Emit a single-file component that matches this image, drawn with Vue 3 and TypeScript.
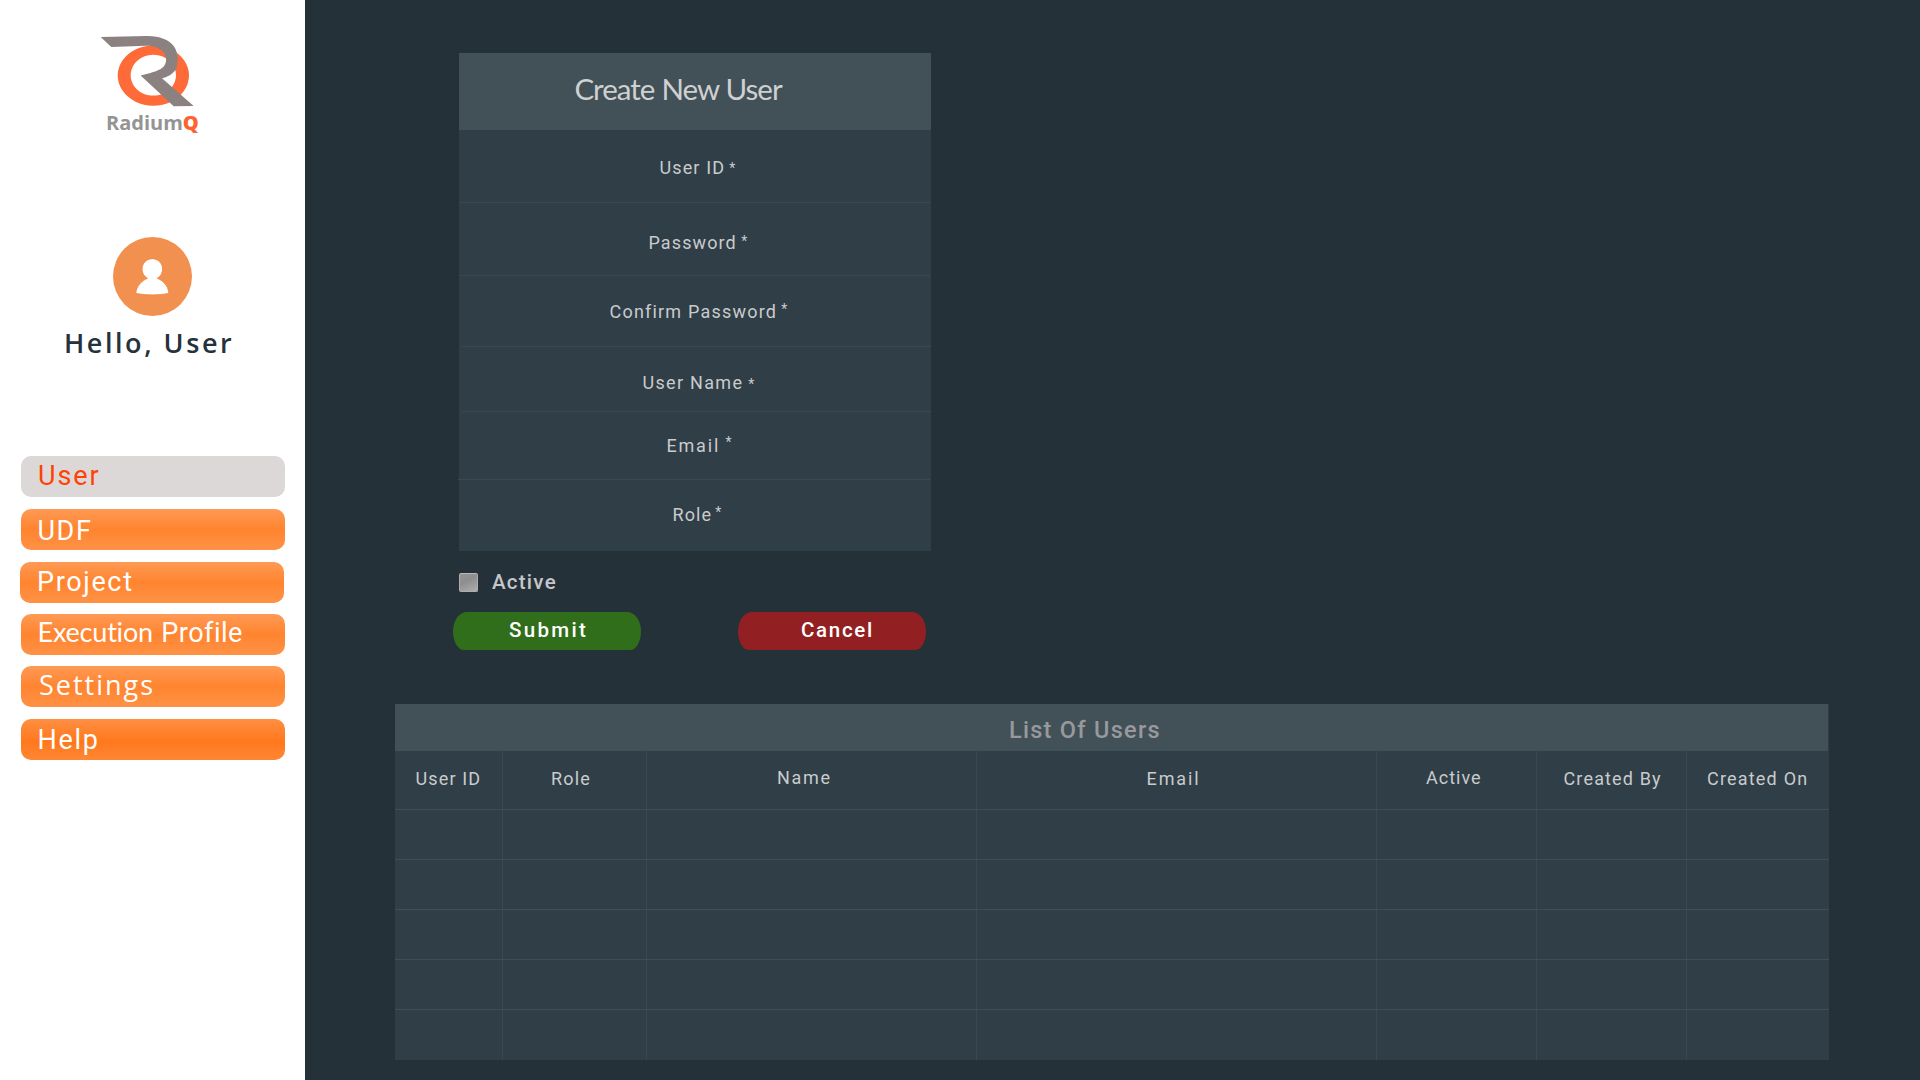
<script setup lang="ts">
interface NavItem {
  words: { text: string; face?: string; spacing: number; gap?: number; drop?: number }[]
  indent: number
  drop: number
  state?: string
}

interface Field {
  label: string
  height: number
  indent: number
  drop: number
  spacing: number
  starGap: number
  starLift: number
  rule?: string
}

interface Column {
  label: string
  indent: number
  spacing: number
  drop: number
}

const nav: NavItem[] = [
  { words: [{ text: 'User', spacing: 1.95 }], indent: 17, drop: 4, state: 'active' },
  { words: [{ text: 'UDF', spacing: 1.6 }], indent: 16.5, drop: 6 },
  { words: [{ text: 'Project', spacing: 1.65 }], indent: 17, drop: 4, state: 'shifted' },
  {
    words: [
      { text: 'Execution', face: 'humanist', spacing: -0.2, drop: -1 },
      { text: 'Profile', spacing: 0.5, gap: 8.4 },
    ],
    indent: 16.5,
    drop: 3,
  },
  { words: [{ text: 'Settings', face: 'open', spacing: 2, drop: -1 }], indent: 18, drop: 4 },
  { words: [{ text: 'Help', spacing: 1.7 }], indent: 16.5, drop: 5, state: 'strong' },
]

const fields: Field[] = [
  { label: 'User ID', height: 73, indent: 200.5, drop: 26, spacing: 1.12, starGap: 4, starLift: 0 },
  { label: 'Password', height: 73, indent: 189.5, drop: 28, spacing: 1.1, starGap: 4.5, starLift: -2 },
  { label: 'Confirm Password', height: 71, indent: 150.5, drop: 24, spacing: 1.2, starGap: 4, starLift: -3, rule: 'right' },
  { label: 'User Name', height: 65, indent: 183.5, drop: 24, spacing: 1.3, starGap: 5, starLift: 1, rule: 'right' },
  { label: 'Email', height: 68, indent: 207.5, drop: 22, spacing: 1.8, starGap: 5.5, starLift: -4, rule: 'left' },
  { label: 'Role', height: 71, indent: 213.5, drop: 23, spacing: 1.1, starGap: 3, starLift: -3, rule: 'none' },
]

const columns: Column[] = [
  { label: 'User ID', indent: 20.5, spacing: 1.15, drop: 16 },
  { label: 'Role', indent: 48, spacing: 1.2, drop: 16 },
  { label: 'Name', indent: 130, spacing: 1.7, drop: 15 },
  { label: 'Email', indent: 169.5, spacing: 1.9, drop: 16 },
  { label: 'Active', indent: 49, spacing: 1, drop: 15 },
  { label: 'Created By', indent: 26.5, spacing: 1.15, drop: 16 },
  { label: 'Created On', indent: 20, spacing: 1.2, drop: 16 },
]

const emptyRows = 5
const px = (n: number) => `${n}px`
</script>

<template>
  <div class="app">
    <aside class="sidebar">
      <div class="brand">
        <svg class="mark" viewBox="0 0 420 260" width="140" height="87" preserveAspectRatio="none" aria-hidden="true">
          <path
            fill="#ff6a39"
            fill-rule="evenodd"
            d="M220 76a107 90 0 1 0 .1 0zM220 104a68 61 0 1 1 -.1 0z"
          />
          <path
            fill="#8c8181"
            d="M62 51 L200 48 C236 47 266 58 281 78 C292 93 295 112 292 132 C289 154 271 168 246 174 L341 257 L281 258 L182 166 C205 160 232 155 247 143 C262 130 262 108 248 94 C237 83 220 77 198 77 L94 81 Z"
          />
        </svg>
        <div class="brand-name">Radium<b>Q</b></div>
      </div>

      <div class="profile">
        <svg class="avatar" viewBox="0 0 237 237" width="79" height="79" aria-hidden="true">
          <circle cx="118.500" cy="118.500" r="118.500" fill="#f2914f" />
          <path
            fill="#fff"
            stroke="#f37f33"
            stroke-width="2.500"
            d="M118 65c17 0 31 14 31 31 0 12-6 22-16 28 19 8 31 22 34 40 1 4-1 5-4 6-26 5-64 5-90 0-4-1-5-3-4-7 4-17 16-31 34-39-10-6-16-16-16-28 0-17 14-31 31-31z"
          />
        </svg>
        <div class="greeting">Hello, User</div>
      </div>

      <nav class="menu">
        <a v-for="(item, i) in nav" :key="i" class="menu-item" :class="item.state" :style="{ paddingLeft: px(item.indent), paddingTop: px(item.drop) }">
          <span
            v-for="word in item.words"
            :key="word.text"
            :class="word.face"
            :style="{ letterSpacing: px(word.spacing), marginLeft: px(word.gap ?? 0), marginTop: px(word.drop ?? 0) }"
          >{{ word.text }}</span>
        </a>
      </nav>
    </aside>

    <main class="content">
      <section class="form">
        <header class="form-title">Create New User</header>
        <div v-for="f in fields" :key="f.label" class="field" :class="f.rule" :style="{ height: px(f.height), paddingLeft: px(f.indent), paddingTop: px(f.drop) }">
          <label :style="{ letterSpacing: px(f.spacing) }">{{ f.label }}</label>
          <span class="star" :style="{ marginLeft: px(f.starGap), marginTop: px(f.starLift) }">*</span>
        </div>
      </section>

      <div class="active-row">
        <span class="checkbox"></span>
        <span class="active-label">Active</span>
      </div>

      <div class="actions">
        <button class="submit" type="button">Submit</button>
        <button class="cancel" type="button">Cancel</button>
      </div>

      <section class="list">
        <header class="list-title">List Of Users</header>
        <div class="row head">
          <div v-for="c in columns" :key="c.label" class="cell" :style="{ paddingLeft: px(c.indent), paddingTop: px(c.drop), letterSpacing: px(c.spacing) }">{{ c.label }}</div>
        </div>
        <div v-for="n in emptyRows" :key="n" class="row">
          <div v-for="c in columns" :key="c.label" class="cell"></div>
        </div>
      </section>
    </main>
  </div>
</template>

<style>
body {
  margin: 0;
  background: #253138;
}
</style>

<style scoped>
.app {
  display: flex;
  width: 1920px;
  height: 1080px;
  overflow: hidden;
  background: #253138;
  font-family: Roboto, sans-serif;
}
.app * {
  box-sizing: border-box;
}
.sidebar {
  width: 305px;
  height: 1080px;
  flex: none;
  background: #fff;
}
.brand {
  height: 237px;
  padding: 20px 0 0 80px;
}
.mark {
  display: block;
}
.brand-name {
  margin: 2px 0 0 26px;
  font: 700 20px/28px "Open Sans", sans-serif;
  letter-spacing: 0;
  color: #949494;
}
.brand-name b {
  color: #ff6231;
}
.profile {
  height: 219px;
  padding-left: 64px;
}
.avatar {
  display: block;
  margin-left: 49px;
}
.greeting {
  margin-top: 11px;
  font: 600 27px/32px "Open Sans", sans-serif;
  letter-spacing: 2.55px;
  color: #25323b;
  white-space: nowrap;
}
.menu {
  display: flex;
  flex-direction: column;
  padding-left: 21px;
}
.menu-item {
  display: flex;
  align-items: flex-start;
  width: 264px;
  height: 41px;
  margin-bottom: 12px;
  border-radius: 10px;
  background: linear-gradient(#ff9a55, #ff842f 50%, #ff9246);
  color: #fff;
  font-size: 27px;
  line-height: 32px;
  white-space: nowrap;
}
.menu-item:nth-child(3),
.menu-item:nth-child(4) {
  margin-bottom: 11px;
}
.menu-item.shifted {
  margin-left: -1px;
}
.menu-item.active {
  background: #dcd8d7;
  color: #ff4206;
}
.menu-item.strong {
  background: linear-gradient(#ff8f44, #ff781c 55%, #ff8734);
}
.humanist {
  font-family: Lato, sans-serif;
}
.open {
  font-family: "Open Sans", sans-serif;
}
.content {
  flex: 1;
  padding: 53px 0 0 90px;
}
.form {
  width: 472px;
  margin-left: 64px;
  background: #303e47;
}
.form-title {
  height: 77px;
  padding: 17px 0 0 115.500px;
  background: #425157;
  color: #cfd0d1;
  font: 400 29.500px/38px Lato, sans-serif;
  letter-spacing: -1px;
  word-spacing: 0.500px;
}
.field {
  position: relative;
  display: flex;
  align-items: flex-start;
  color: #c9cbcd;
  font-size: 18px;
  line-height: 24px;
  white-space: nowrap;
}
.field::after {
  content: "";
  position: absolute;
  left: 0;
  right: 1px;
  bottom: 0;
  height: 1px;
  background: #3b4850;
}
.field.right::after {
  left: 3px;
  right: 0;
}
.field.left::after {
  left: -1px;
}
.field.none::after {
  display: none;
}
.star {
  font-size: 14px;
}
.active-row {
  display: flex;
  height: 61px;
  padding: 20px 0 0 64px;
}
.checkbox {
  width: 19px;
  height: 19px;
  margin: 2px 14px 0 0;
  border: 1px solid #aeaeae;
  border-top-color: #b9b9b9;
  border-radius: 2px;
  background: linear-gradient(155deg, #959595, #8e8e8e 40%, #adadad);
}
.active-label {
  margin-top: -1px;
  font-size: 20.500px;
  font-weight: 500;
  line-height: 24px;
  letter-spacing: 1.25px;
  color: #c5c6ca;
}
.actions {
  display: flex;
  gap: 97px;
  height: 92px;
  padding-left: 58px;
}
.actions button {
  display: block;
  width: 188px;
  height: 38px;
  padding: 0 0 2px 56px;
  border: 0;
  border-radius: 14px 14px 11px 11px / 19px 19px 19px 19px;
  color: #fff;
  font: 500 20.500px/24px Roboto, sans-serif;
  text-align: left;
}
.actions .submit {
  background: #306e1b;
  letter-spacing: 2.3px;
}
.actions .cancel {
  padding-left: 63px;
  background: #922022;
  letter-spacing: 1.7px;
}
.list {
  width: 1434px;
  background: #303e47;
}
.list-title {
  width: 1433px;
  height: 47px;
  padding: 12px 0 0 614px;
  background: #425157;
  color: #98999d;
  font-size: 23.500px;
  font-weight: 500;
  line-height: 28px;
  letter-spacing: 1.28px;
}
.row {
  display: grid;
  grid-template-columns: 108px 144px 330px 400px 160px 150px 142px;
  height: 50px;
  border-bottom: 1px solid #414e56;
}
.row.head {
  height: 59px;
}
.row:last-child {
  border-bottom: 0;
}
.cell {
  border-right: 1px solid #3b4850;
  color: #c9cbcd;
  font-size: 18px;
  line-height: 24px;
  white-space: nowrap;
}
.cell:last-child {
  border-right: 0;
}
</style>
